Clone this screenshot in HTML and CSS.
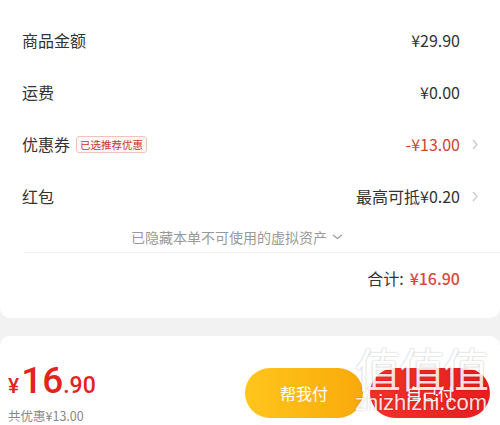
FILE: index.html
```html
<!DOCTYPE html>
<html lang="zh-CN">
  <head>
    <meta charset="UTF-8" />
    <title>订单结算</title>
    <link rel="stylesheet" href="styles.css">
  </head>
  <body>
    <div class="summary-card">
      <div class="row">
        <span class="label">商品金额</span>
        <span class="value">¥29.90</span>
        <span class="arrow"></span>
      </div>
      <div class="row">
        <span class="label">运费</span>
        <span class="value">¥0.00</span>
        <span class="arrow"></span>
      </div>
      <div class="row">
        <span class="label">优惠券</span>
        <span class="badge">已选推荐优惠</span>
        <span class="value red">-¥13.00</span>
        <span class="arrow">
          <svg width="6" height="11" viewBox="0 0 6 11"><path d="M1 1l4 4.5L1 10" fill="none" stroke="#c8c8c8" stroke-width="1.2"/></svg>
        </span>
      </div>
      <div class="row">
        <span class="label">红包</span>
        <span class="value">最高可抵¥0.20</span>
        <span class="arrow">
          <svg width="6" height="11" viewBox="0 0 6 11"><path d="M1 1l4 4.5L1 10" fill="none" stroke="#c8c8c8" stroke-width="1.2"/></svg>
        </span>
      </div>
      <div class="hidden-assets">
        已隐藏本单不可使用的虚拟资产
        <svg width="11" height="6" viewBox="0 0 11 6"><path d="M1 1l4.5 3.5L10 1" fill="none" stroke="#999" stroke-width="1.2"/></svg>
      </div>
      <div class="total-row">
        <span class="total-label">合计:</span>
        <span class="total-value">¥16.90</span>
      </div>
    </div>

    <div class="pay-bar">
      <div class="pay-price">
        <div class="price"><span class="yen">¥</span><span class="int">16</span><span class="dec">.90</span></div>
        <div class="saved">共优惠¥13.00</div>
      </div>
      <div class="pay-buttons">
        <button class="btn btn-friend">帮我付</button>
        <button class="btn btn-self">自己付</button>
      </div>
      <!-- watermark from the screenshot -->
      <div class="watermark">
        <div class="wm-big">值值值</div>
        <div class="wm-small">zhizhizhi.com</div>
      </div>
    </div>
  </body>
</html>
```

FILE: styles.css
```css
body {
  margin: 0;
  font-family: "Noto Sans CJK SC", "Noto Sans", sans-serif;
  background-color: #f2f2f2;
  color: #333;
  width: 500px;
  height: 425px;
  overflow: hidden;
}
.summary-card {
  background-color: #fff;
  border-radius: 0 0 10px 10px;
  padding-top: 14px;
  padding-bottom: 15px;
}
.row {
  display: flex;
  align-items: center;
  height: 52px;
  padding-left: 22px;
  padding-right: 22px;
  font-size: 16px;
}
.label {
  color: #333;
}
.badge {
  margin-left: 6px;
  font-size: 10.5px;
  color: #c8392b;
  border: 1px solid #f0c4bd;
  border-radius: 3px;
  padding: 0 3px;
  line-height: 15px;
  background-color: #fff7f5;
}
.value {
  margin-left: auto;
  color: #333;
}
.value.red {
  color: #cf4530;
}
.arrow {
  width: 18px;
  display: flex;
  justify-content: flex-end;
  align-items: center;
}
.hidden-assets {
  height: 30px;
  margin-left: 24px;
  display: flex;
  justify-content: center;
  align-items: center;
  gap: 5px;
  font-size: 14px;
  color: #999;
  border-bottom: 1px solid #f0f0f0;
  padding-right: 50px;
}
.total-row {
  height: 50px;
  display: flex;
  justify-content: flex-end;
  align-items: center;
  padding-right: 40px;
  font-size: 16px;
}
.total-label {
  color: #333;
  margin-right: 6px;
}
.total-value {
  color: #e0473a;
  font-weight: 500;
  font-size: 16px;
}
.pay-bar {
  position: relative;
  margin-top: 18px;
  height: 90px;
  background-color: #fff;
  border-radius: 10px 10px 0 0;
  display: flex;
  align-items: center;
  justify-content: space-between;
  padding: 0 10px 0 8px;
}
.pay-price {
  margin-top: 26px;
}
.price {
  color: #e1251b;
  line-height: 36px;
  font-family: "Roboto", sans-serif;
  font-weight: 500;
}
.yen {
  font-size: 21px;
  margin-right: 2px;
}
.int {
  font-size: 37px;
}
.dec {
  font-size: 23px;
}
.saved {
  font-size: 12.5px;
  color: #888;
  margin-top: 0;
}
.pay-buttons {
  display: flex;
  gap: 7px;
  margin-top: 24px;
}
.btn {
  width: 118px;
  height: 50px;
  border: none;
  border-radius: 25px;
  color: #fff;
  font-size: 16px;
  font-family: "Noto Sans CJK SC", sans-serif;
}
.btn-friend {
  background: linear-gradient(90deg, #ffc61c, #f9a90a);
}
.btn-self {
  width: 120px;
  background: linear-gradient(90deg, #f5302a, #e61e1e);
}
.watermark {
  position: absolute;
  right: 4px;
  top: 6px;
  width: 150px;
  text-align: center;
  color: #fff;
  text-shadow: 0 0 2px rgba(0, 0, 0, 0.35);
  pointer-events: none;
}
.wm-big {
  font-size: 46px;
  line-height: 50px;
  letter-spacing: -2px;
  opacity: 0.85;
}
.wm-small {
  font-size: 22px;
  line-height: 22px;
  font-family: "Liberation Sans", sans-serif;
  opacity: 0.85;
}
```
